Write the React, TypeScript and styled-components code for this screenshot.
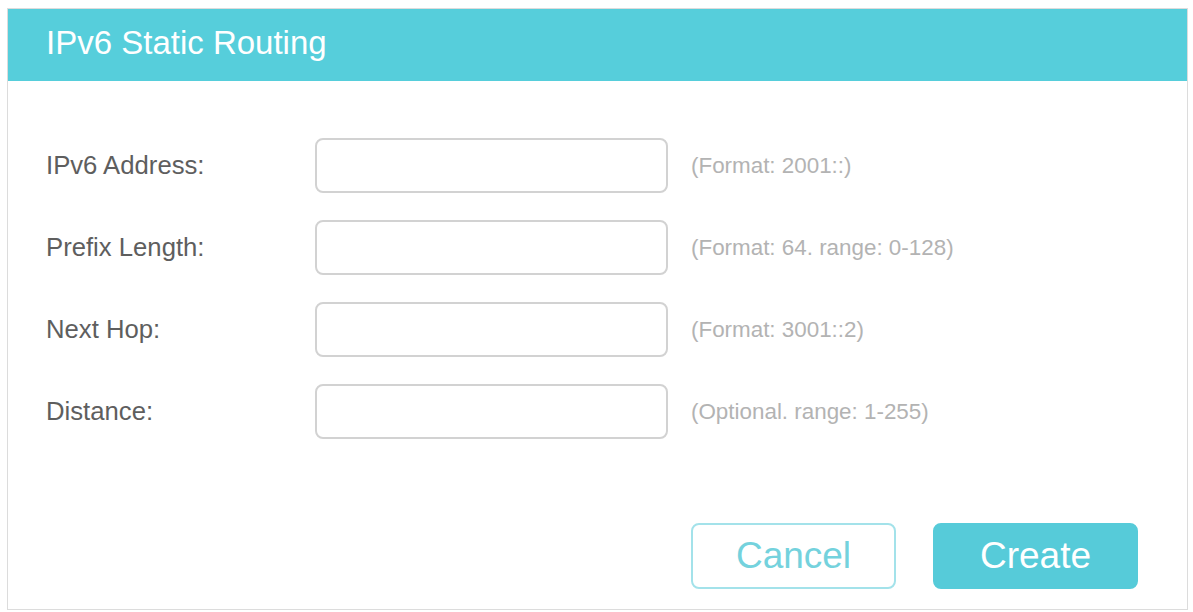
import React from "react";
import styled, { createGlobalStyle } from "styled-components";

// global
const GlobalStyle = createGlobalStyle`
  html, body {
    margin: 0;
    padding: 0;
    background: #ffffff;
  }
  body {
    font-family: "Liberation Sans", Arial, sans-serif;
  }
`;

// style
const Panel = styled.section`
  box-sizing: border-box;
  width: 1181px;
  height: 602px;
  margin: 8px 0 0 7px;
  border: 1px solid #dcdcdc;
  display: flex;
  flex-direction: column;
`;

const Header = styled.header`
  height: 72px;
  background: #56cedb;
  display: flex;
  align-items: center;
  padding: 0 0 5px 38px;
  box-sizing: border-box;
  flex-shrink: 0;
`;

const Title = styled.h1`
  margin: 0;
  font-size: 33px;
  font-weight: normal;
  color: #ffffff;
`;

const Form = styled.div`
  flex: 1;
  display: flex;
  flex-direction: column;
  padding: 57px 49px 20px 38px;
`;

const Fields = styled.div`
  display: flex;
  flex-direction: column;
  gap: 27px;
`;

const Row = styled.div`
  display: grid;
  grid-template-columns: 269px 353px auto;
  align-items: center;
  height: 55px;
`;

const Label = styled.label`
  font-size: 25.7px;
  color: #5e5e5e;
`;

const Input = styled.input`
  box-sizing: border-box;
  width: 353px;
  height: 55px;
  border: 2px solid #d2d2d2;
  border-radius: 8px;
  outline: none;
`;

const Hint = styled.span`
  margin-left: 23px;
  font-size: 22.4px;
  color: #b3b3b3;
`;

const Actions = styled.div`
  margin-top: auto;
  display: flex;
  justify-content: flex-end;
  gap: 37px;
`;

const Button = styled.button<{ $primary?: boolean }>`
  box-sizing: border-box;
  width: 205px;
  height: 66px;
  border-radius: 8px;
  font-family: "Liberation Sans", Arial, sans-serif;
  font-size: 37px;
  cursor: pointer;
  border: 2px solid ${(p) => (p.$primary ? "#56cbd9" : "#a3e2ea")};
  background: ${(p) => (p.$primary ? "#56cbd9" : "#ffffff")};
  color: ${(p) => (p.$primary ? "#ffffff" : "#74d2dd")};
`;

const fields = [
  { label: "IPv6 Address:", hint: "(Format: 2001::)" },
  { label: "Prefix Length:", hint: "(Format: 64. range: 0-128)" },
  { label: "Next Hop:", hint: "(Format: 3001::2)" },
  { label: "Distance:", hint: "(Optional. range: 1-255)" },
];

const App = () => {
  return (
    <>
      <GlobalStyle />
      <Panel>
        <Header>
          <Title>IPv6 Static Routing</Title>
        </Header>
        <Form>
          <Fields>
            {fields.map((f) => (
              <Row key={f.label}>
                <Label>{f.label}</Label>
                <Input type="text" />
                <Hint>{f.hint}</Hint>
              </Row>
            ))}
          </Fields>
          <Actions>
            <Button>Cancel</Button>
            <Button $primary>Create</Button>
          </Actions>
        </Form>
      </Panel>
    </>
  );
};

export default App;
